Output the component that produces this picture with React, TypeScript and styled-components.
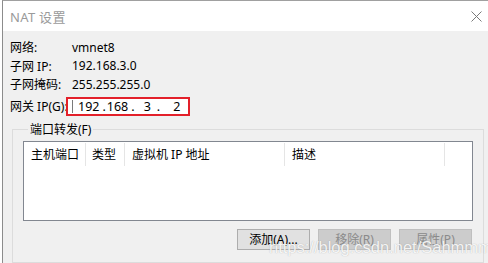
import React from 'react';
import styled, { createGlobalStyle } from 'styled-components';

const GlobalStyle = createGlobalStyle`
  html, body {
    margin: 0;
    padding: 0;
    background: #ffffff;
  }
  body {
    width: 488px;
    height: 263px;
    overflow: hidden;
    font-family: "Noto Sans", "Noto Sans CJK SC", sans-serif;
    font-size: 12px;
    color: #000;
  }
`;

const Window = styled.div`
  position: relative;
  display: flex;
  flex-direction: column;
  margin-left: 2px;
  height: 263px;
  border-left: 1px solid #8c8c8c;
  border-top: 1px solid #a0a0a0;
  box-sizing: border-box;
`;

const TitleBar = styled.div`
  height: 30px;
  display: flex;
  align-items: center;
  justify-content: space-between;
  padding: 0 6px 0 7px;
  background: #ffffff;
  flex-shrink: 0;
`;

const Title = styled.span`
  color: #9a9a9a;
  font-size: 13px;
  letter-spacing: 0.3px;
`;

const CloseIcon = styled.svg`
  width: 11px;
  height: 11px;
`;

const Body = styled.div`
  flex: 1;
  background: #f0f0f0;
  padding: 7px 4px 0 7px;
  display: flex;
  flex-direction: column;
`;

const InfoGrid = styled.div`
  display: grid;
  grid-template-columns: 62px auto;
  grid-auto-rows: 18.5px;
  align-items: center;
`;

const Label = styled.span`
  white-space: nowrap;
`;

const GatewayRow = styled.div`
  display: flex;
  align-items: center;
  margin-top: 3px;
  height: 19px;
`;

const GatewayLabel = styled.span`
  width: 56px;
  white-space: nowrap;
`;

const IpBox = styled.div`
  width: 124px;
  height: 19px;
  box-sizing: border-box;
  border: 2px solid #e3202a;
  background: #ffffff;
  display: flex;
  align-items: center;
  padding-left: 4px;
`;

const Caret = styled.span`
  width: 1px;
  height: 13px;
  background: #7a7a7a;
  margin-right: 5px;
`;

const Octet = styled.span<{ $ml: number }>`
  margin-left: ${p => p.$ml}px;
  font-size: 12.5px;
`;

const GroupBox = styled.fieldset`
  margin: 7px 0 0 2px;
  padding: 4px 10px 11px 10px;
  border: 1px solid #dcdcdc;
  min-width: 0;
  flex: 1;
  box-sizing: border-box;
`;

const Legend = styled.legend`
  padding: 0 2px;
  margin-left: 5px;
  line-height: 14px;
`;

const ListView = styled.div`
  height: 80px;
  background: #ffffff;
  border: 1px solid #828790;
  box-sizing: border-box;
`;

const HeaderRow = styled.div`
  display: flex;
  height: 24px;
`;

const HeaderCell = styled.div<{ $w: number; $pad?: number }>`
  width: ${p => p.$w}px;
  flex-shrink: 0;
  box-sizing: border-box;
  padding-left: ${p => p.$pad ?? 7}px;
  display: flex;
  align-items: center;
  border-right: 1px solid #e5e5e5;
  margin-top: 1px;
  white-space: nowrap;
`;

const ButtonRow = styled.div`
  display: flex;
  justify-content: flex-end;
  gap: 8px;
  margin-top: 8px;
  padding-right: 1px;
`;

const Button = styled.button<{ $disabled?: boolean }>`
  width: 73px;
  height: 21px;
  box-sizing: border-box;
  font: inherit;
  padding: 0;
  background: ${p => (p.$disabled ? '#cccccc' : '#e1e1e1')};
  border: 1px solid ${p => (p.$disabled ? '#bfbfbf' : '#adadad')};
  color: ${p => (p.$disabled ? '#8a8a8a' : '#000')};
`;

const Watermark = styled.div`
  position: absolute;
  left: 266px;
  top: 237px;
  font-family: "Liberation Sans", Arial, sans-serif;
  font-size: 16.5px;
  color: rgba(255, 255, 255, 0.9);
  text-shadow: 0 0 1px rgba(110, 110, 110, 0.55);
  white-space: nowrap;
  pointer-events: none;
`;

const octets: [string, number][] = [
  ['192', 0],
  ['.', 3],
  ['168', 1],
  ['.', 3],
  ['3', 9],
  ['.', 6],
  ['2', 13],
];

export default function App() {
  return (
    <>
      <GlobalStyle />
      <Window>
        <TitleBar>
          <Title>NAT 设置</Title>
          <CloseIcon viewBox="0 0 11 11">
            <path d="M0.5 0.5 L10.5 10.5 M10.5 0.5 L0.5 10.5" stroke="#7a7a7a" strokeWidth="1" />
          </CloseIcon>
        </TitleBar>
        <Body>
          <InfoGrid>
            <Label>网络:</Label>
            <span>vmnet8</span>
            <Label>子网 IP:</Label>
            <span>192.168.3.0</span>
            <Label>子网掩码:</Label>
            <span>255.255.255.0</span>
          </InfoGrid>
          <GatewayRow>
            <GatewayLabel>网关 IP(G):</GatewayLabel>
            <IpBox>
              <Caret />
              {octets.map(([t, ml], i) => (
                <Octet key={i} $ml={ml}>{t}</Octet>
              ))}
            </IpBox>
          </GatewayRow>
          <GroupBox>
            <Legend>端口转发(F)</Legend>
            <ListView>
              <HeaderRow>
                <HeaderCell $w={62}>主机端口</HeaderCell>
                <HeaderCell $w={39} $pad={6}>类型</HeaderCell>
                <HeaderCell $w={160}>虚拟机 IP 地址</HeaderCell>
                <HeaderCell $w={160}>描述</HeaderCell>
              </HeaderRow>
            </ListView>
            <ButtonRow>
              <Button>添加(A)...</Button>
              <Button $disabled>移除(R)</Button>
              <Button $disabled>属性(P)</Button>
            </ButtonRow>
          </GroupBox>
        </Body>
        <Watermark>https://blog.csdn.net/Sahmmm</Watermark>
      </Window>
    </>
  );
}
